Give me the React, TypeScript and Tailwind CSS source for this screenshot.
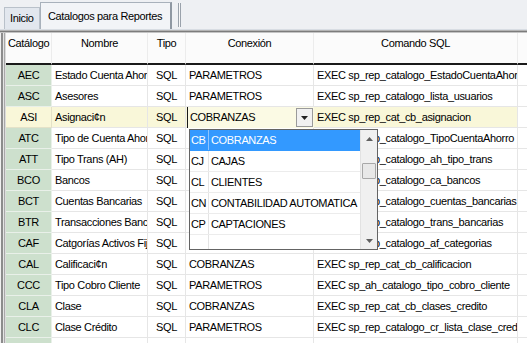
import React from "react";

type Row = { c: string; n: string; t: string; x: string; s: string };

const rows: Row[] = [
  { c: "AEC", n: "Estado Cuenta Ahorro", t: "SQL", x: "PARAMETROS", s: "EXEC sp_rep_catalogo_EstadoCuentaAhorro" },
  { c: "ASC", n: "Asesores", t: "SQL", x: "PARAMETROS", s: "EXEC sp_rep_catalogo_lista_usuarios" },
  { c: "ASI", n: "Asignaci¢n", t: "SQL", x: "COBRANZAS", s: "EXEC sp_rep_cat_cb_asignacion" },
  { c: "ATC", n: "Tipo de Cuenta Ahorro", t: "SQL", x: "PARAMETROS", s: "EXEC sp_rep_catalogo_TipoCuentaAhorro" },
  { c: "ATT", n: "Tipo Trans (AH)", t: "SQL", x: "PARAMETROS", s: "EXEC sp_rep_catalogo_ah_tipo_trans" },
  { c: "BCO", n: "Bancos", t: "SQL", x: "PARAMETROS", s: "EXEC sp_rep_catalogo_ca_bancos" },
  { c: "BCT", n: "Cuentas Bancarias", t: "SQL", x: "PARAMETROS", s: "EXEC sp_rep_catalogo_cuentas_bancarias" },
  { c: "BTR", n: "Transacciones Bancarias", t: "SQL", x: "PARAMETROS", s: "EXEC sp_rep_catalogo_trans_bancarias" },
  { c: "CAF", n: "Catgorías Activos Fijos", t: "SQL", x: "PARAMETROS", s: "EXEC sp_rep_catalogo_af_categorias" },
  { c: "CAL", n: "Calificaci¢n", t: "SQL", x: "COBRANZAS", s: "EXEC sp_rep_cat_cb_calificacion" },
  { c: "CCC", n: "Tipo Cobro Cliente", t: "SQL", x: "PARAMETROS", s: "EXEC sp_ah_catalogo_tipo_cobro_cliente" },
  { c: "CLA", n: "Clase", t: "SQL", x: "COBRANZAS", s: "EXEC sp_rep_cat_cb_clases_credito" },
  { c: "CLC", n: "Clase Crédito", t: "SQL", x: "PARAMETROS", s: "EXEC sp_rep_catalogo_cr_lista_clase_credito" },
  { c: "CLI", n: "Clientes", t: "SQL", x: "PARAMETROS", s: "EXEC sp_rep_catalogo_clientes" },
];

const items = [
  ["CB", "COBRANZAS"],
  ["CJ", "CAJAS"],
  ["CL", "CLIENTES"],
  ["CN", "CONTABILIDAD AUTOMATICA"],
  ["CP", "CAPTACIONES"],
];

function GridRow({ r }: { r: Row }) {
  const sel = r.c === "ASI";
  const bg = sel ? "bg-[#f9f7d9]" : "bg-white";
  return (
    <div className={`flex h-[21px] ${bg}`}>
      <div className={`w-[46px] shrink-0 border-r border-b ${sel ? "bg-[#f9f7d9] border-[#e4e2c8]" : "bg-[#cde0cd] border-[#e9f0e9]"} flex items-center justify-center`}>
        {r.c}
      </div>
      <div className="w-[96px] shrink-0 border-r border-b border-[#e6e6e6] flex items-center pl-[3px] overflow-hidden whitespace-nowrap">
        {r.n}
      </div>
      <div className="w-[38px] shrink-0 border-r border-b border-[#e6e6e6] flex items-center justify-center">
        {r.t}
      </div>
      <div className="w-[128px] shrink-0 border-r border-b border-[#e6e6e6] flex items-center pl-[3px] overflow-hidden whitespace-nowrap">
        {sel ? "" : r.x}
      </div>
      <div className="w-[204px] shrink-0 border-r border-b border-[#e6e6e6] flex items-center pl-[3px] overflow-hidden whitespace-nowrap">
        {r.s}
      </div>
      <div className="flex-1 border-b border-[#e6e6e6] bg-white" />
    </div>
  );
}

export default function App() {
  return (
    <div className="w-[527px] h-[343px] overflow-hidden bg-[#f0f0f0] text-[11px] tracking-[-0.35px] text-black font-['Liberation_Sans',Arial,sans-serif] flex flex-col">
      {/* tab bar */}
      <div className="h-[30px] shrink-0 flex items-end pl-[4px] bg-[#eef0f3] border-b border-[#d8dde3]">
        <div className="h-[22px] px-[5px] flex items-center bg-[#e2e7ee] border border-b-0 border-[#b9c1ca]">
          Inicio
        </div>
        <div className="h-[27px] w-[132px] flex items-start pt-[5px] justify-center bg-[#f2f4f7] border border-b-0 border-[#a8b1bb] border-r-2 border-r-[#8f98a2]">
          Catalogos para Reportes
        </div>
        <div className="ml-[6px] mb-[2px] h-[24px] w-[3px] border-l border-r border-[#9aa2ab] bg-[#f7f7f7]" />
      </div>
      {/* grid */}
      <div className="relative flex-1 flex flex-col">
        <div className="h-[3px] shrink-0 flex flex-col">
          <div className="h-[1px] bg-[#b4b4b4]" />
          <div className="h-[1px] bg-[#7c7c7c]" />
          <div className="h-[1px] bg-[#c4c4c4]" />
        </div>
        <div className="flex flex-1">
          <div className="w-[6px] shrink-0 flex">
            <div className="w-[1px] bg-[#f0f0f0]" />
            <div className="w-[2px] bg-[#8c8c8c]" />
            <div className="w-[1px] bg-[#e4e4e4]" />
            <div className="w-[1px] bg-[#a8a8a8]" />
            <div className="w-[1px] bg-[#dcdcdc]" />
          </div>
          <div className="flex-1 flex flex-col bg-white">
            {/* header */}
            <div className="flex h-[32px] shrink-0 bg-[#fbfbfb]">
              <div className="w-[46px] shrink-0 border-r border-b-2 border-r-[#ececec] border-b-[#1a1a1a] pl-[2px] pt-[2px]">Catálogo</div>
              <div className="w-[96px] shrink-0 border-r border-b-2 border-r-[#ececec] border-b-[#1a1a1a] text-center pt-[2px]">Nombre</div>
              <div className="w-[38px] shrink-0 border-r border-b-2 border-r-[#ececec] border-b-[#1a1a1a] text-center pt-[2px]">Tipo</div>
              <div className="w-[128px] shrink-0 border-r border-b-2 border-r-[#ececec] border-b-[#1a1a1a] text-center pt-[2px]">Conexión</div>
              <div className="w-[204px] shrink-0 border-r border-b-2 border-r-[#ececec] border-b-[#1a1a1a] text-center pt-[2px]">Comando SQL</div>
              <div className="flex-1 border-b-2 border-b-[#1a1a1a]" />
            </div>
            {rows.map((r) => (
              <GridRow key={r.c} r={r} />
            ))}
          </div>
        </div>

        {/* combo editor on ASI row */}
        <div className="absolute left-[187px] top-[77px] w-[127px] h-[21px] bg-[#fbfae4] border-l border-[#1a1a1a] flex items-center">
          <span className="pl-[2px] flex-1">COBRANZAS</span>
          <div className="w-[17px] h-[19px] mr-[1px] bg-[#f1f1f1] border border-[#9a9a9a] flex items-center justify-center">
            <svg width="9" height="6" viewBox="0 0 9 6">
              <path d="M1 1h7L4.5 5z" fill="#222" />
            </svg>
          </div>
        </div>

        {/* dropdown list */}
        <div className="absolute left-[189px] top-[99px] w-[189px] h-[121px] bg-white border border-[#646464] flex">
          <div className="flex-1 flex flex-col">
            {items.map(([code, name], i) => (
              <div
                key={code}
                className={`flex h-[21px] border-b ${i === 0 ? "bg-[#3399ff] text-white border-[#3399ff]" : "border-[#ececec]"}`}
              >
                <div className={`w-[19px] shrink-0 border-r ${i === 0 ? "border-[#8fc4ff]" : "border-[#e4e4e4]"} flex items-center pl-[1px]`}>{code}</div>
                <div className="flex items-center pl-[2px] whitespace-nowrap">{name}</div>
              </div>
            ))}
            <div className="flex-1 flex">
              <div className="w-[19px] border-r border-[#e4e4e4]" />
            </div>
          </div>
          {/* scrollbar */}
          <div className="w-[17px] shrink-0 bg-[#f0f0f0] border-l border-[#e2e2e2] flex flex-col items-center">
            <div className="h-[17px] w-full flex items-center justify-center">
              <svg width="7" height="4" viewBox="0 0 7 4"><path d="M0 4L3.5 0L7 4z" fill="#606060" /></svg>
            </div>
            <div className="mt-[16px] h-[16px] w-[14px] bg-[#e8e8e8] border border-[#a8a8a8] rounded-[1px]" />
            <div className="flex-1" />
            <div className="h-[17px] w-full flex items-center justify-center">
              <svg width="7" height="4" viewBox="0 0 7 4"><path d="M0 0L3.5 4L7 0z" fill="#606060" /></svg>
            </div>
          </div>
        </div>
      </div>
    </div>
  );
}
